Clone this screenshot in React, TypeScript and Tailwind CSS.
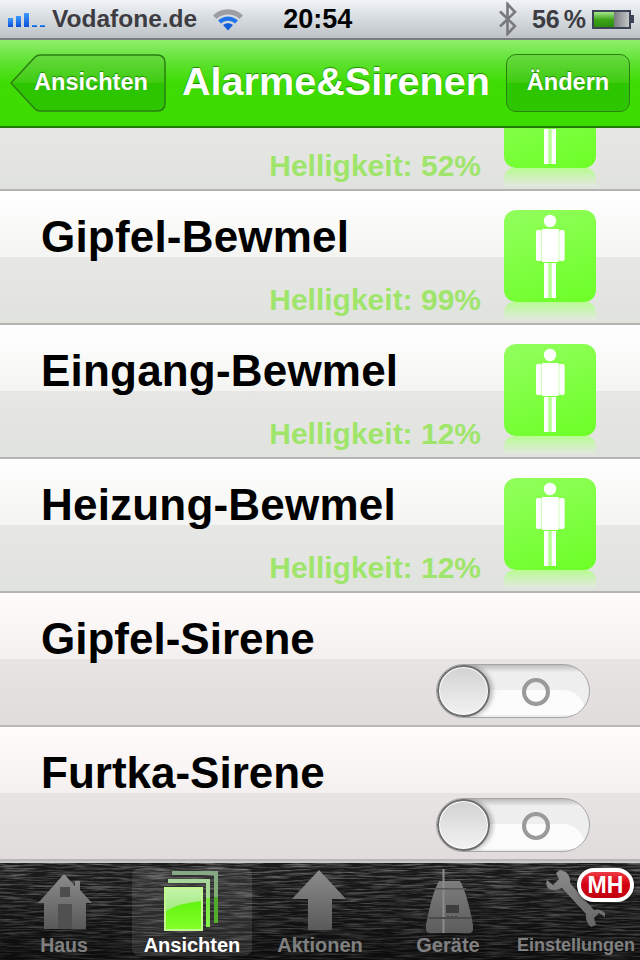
import React from "react";

const font = "font-['Liberation_Sans',Arial,sans-serif]";

function Person() {
  return (
    <svg viewBox="0 0 92 92" className="w-[92px] h-[92px] block">
      <g fill="#fff">
        <circle cx="46" cy="11" r="6.2" />
        <rect x="32" y="20" width="28.5" height="31" rx="2" opacity="0.55" />
        <rect x="40" y="53" width="12" height="35" opacity="0.45" />
        <rect x="38" y="19" width="16.5" height="33" />
        <rect x="32" y="20" width="5.2" height="31" rx="2" />
        <rect x="55.3" y="20" width="5.2" height="31" rx="2" />
        <rect x="40" y="53" width="4.3" height="35" />
        <rect x="47.7" y="53" width="4.3" height="35" />
      </g>
    </svg>
  );
}

function LightRow({ title, value }: { title: string; value: string }) {
  return (
    <div className="flex h-[134px] border-b-2 border-[#b4b4b2] bg-[linear-gradient(to_bottom,#ffffff_0%,#f4f5f2_50%,#e7e8e5_50%,#e0e2de_100%)] pl-[41px] pr-[44px]">
      <div className="flex flex-1 flex-col">
        <div className="mt-[20px] h-[52px] text-[44px] leading-[52px] font-bold tracking-[0.2px] text-black">{title}</div>
        <div className="mt-[21px] pr-[23px] text-right text-[30px] leading-[32px] font-bold text-[#9fe56b]">{value}</div>
      </div>
      <div className="mt-[19px] w-[92px]">
        <div className="h-[92px] w-[92px] rounded-[12px] bg-[linear-gradient(160deg,#92ff5e_0%,#6cff26_100%)]">
          <Person />
        </div>
        <div className="h-[18px] w-[92px] rounded-t-[10px] bg-[linear-gradient(to_bottom,#b8fb92_0%,#e3e8e0_100%)]" />
      </div>
    </div>
  );
}

function SirenRow({ title }: { title: string }) {
  return (
    <div className="flex h-[134px] border-b-2 border-[#b8b6b5] bg-[linear-gradient(to_bottom,#fffcfb_0%,#f4f0ef_50%,#e8e4e3_50%,#e0dcdb_100%)] pl-[41px] pr-[50px]">
      <div className="flex-1">
        <div className="mt-[20px] h-[52px] text-[44px] leading-[52px] font-bold text-black">{title}</div>
      </div>
      <div className="relative mt-[71px] h-[54px] w-[154px] overflow-hidden rounded-full border border-[#a5a5a5] bg-[linear-gradient(to_bottom,#bdbdbd_0%,#eeeeee_14%,#efefef_100%)]">
        <div className="absolute left-[40px] top-[25px] h-[25px] w-[108px] rounded-tr-[22px] bg-[#fcfcfc]" />
        <div className="absolute left-[85px] top-[13px] h-[28px] w-[28px] rounded-full border-[4px] border-[#9a9a9a]" />
        <div className="absolute left-0 top-0 h-[52px] w-[53px] rounded-full border-2 border-[#6e6e6e] bg-[linear-gradient(to_bottom,#d2d2d2,#f2f2f2)] shadow-[3px_0_4px_rgba(0,0,0,0.25),inset_0_0_0_1px_#ffffff]" />
      </div>
    </div>
  );
}

function Signal() {
  const bars = ["h-[9px]", "h-[11px]", "h-[14px]", "h-[2px]", "h-[2px]"];
  return (
    <div className="flex h-[16px] items-end gap-[3px]">
      {bars.map((b, i) => (
        <div key={i} className={`w-[5px] ${b} bg-[linear-gradient(to_bottom,#3f9bff,#0a4fd8)]`} />
      ))}
    </div>
  );
}

function Wifi() {
  return (
    <svg width="32" height="25" viewBox="0 0 32 25" className="block">
      <path d="M1 8.5 C9 0 23 0 31 8.5 L27.5 12 C21 6 11 6 4.5 12 Z" fill="#9c9ea3" />
      <path d="M6 13.5 C12 8 20 8 26 13.5 L23 16.5 C18.5 12.8 13.5 12.8 9 16.5 Z" fill="#1f74e8" />
      <path d="M11 18 C14 15.5 18 15.5 21 18 L16 23.5 Z" fill="#1260d8" />
    </svg>
  );
}

function Bluetooth() {
  return (
    <svg width="20" height="34" viewBox="0 0 20 34" className="block">
      <path d="M2 9.5 L17 24 L9.5 32 L9.5 2 L17 10 L2 24.5" fill="none" stroke="#77797d" strokeWidth="2.6" />
    </svg>
  );
}

function Battery() {
  return (
    <div className="flex items-center">
      <div className="h-[19px] w-[39px] border-2 border-[#3c4356] bg-[linear-gradient(to_right,#33393f,#7d7f82_60%,#c4c6c8)]">
        <div className="h-full w-[20px] bg-[linear-gradient(to_bottom,#a5e88d,#3fa51a_50%,#2a8c10)]" />
      </div>
      <div className="h-[8px] w-[3px] bg-[#3c4356]" />
    </div>
  );
}

function BackShape() {
  return (
    <svg viewBox="0 0 156 58" className="absolute inset-0 h-[58px] w-[156px]">
      <defs>
        <linearGradient id="back" x1="0" y1="0" x2="0" y2="1">
          <stop offset="0" stopColor="#67d93f" />
          <stop offset="0.5" stopColor="#3fcb12" />
          <stop offset="0.5" stopColor="#2dc400" />
          <stop offset="1" stopColor="#2dc600" />
        </linearGradient>
      </defs>
      <path
        d="M1 29 L25 3 Q27 1 31 1 L147 1 Q155 1 155 9 L155 49 Q155 57 147 57 L31 57 Q27 57 25 55 Z"
        fill="url(#back)"
        stroke="#2b7f12"
        strokeWidth="1.5"
      />
    </svg>
  );
}

function Grad({ id, from = "#8c8c8c", to = "#595959" }: { id: string; from?: string; to?: string }) {
  return (
    <defs>
      <linearGradient id={id} x1="0" y1="0" x2="0" y2="1">
        <stop offset="0" stopColor={from} />
        <stop offset="1" stopColor={to} />
      </linearGradient>
    </defs>
  );
}

function House() {
  return (
    <svg width="54" height="55" viewBox="0 0 54 55" className="mb-[4px] ml-[2px] block">
      <Grad id="h" />
      <path d="M26 0 L37 12 L37 7 L42 7 L42 16 L54 29 L48 29 L48 55 L6 55 L6 29 L0 29 Z" fill="url(#h)" />
      <rect x="22" y="13" width="10" height="10" fill="#4d4d4d" />
      <rect x="20" y="30" width="14" height="25" fill="#505050" />
    </svg>
  );
}

function Arrow() {
  return (
    <svg width="54" height="60" viewBox="0 0 54 60" className="mb-[3px] mr-[2px] block">
      <Grad id="a" />
      <path d="M0 29 L27 0 L54 29 L40 29 L40 60 L16 60 L16 29 Z" fill="url(#a)" />
    </svg>
  );
}

function Device() {
  return (
    <svg width="47" height="64" viewBox="0 0 47 64" className="ml-[3px] block">
      <Grad id="d" from="#7d7d7d" to="#5c5c5c" />
      <path d="M13 12 L34 12 Q41 24 47 56 L47 60 Q47 64 43 64 L4 64 Q0 64 0 60 L0 56 Q6 24 13 12 Z" fill="url(#d)" />
      <rect x="16.5" y="0" width="2" height="64" fill="#8b8b8b" />
      <rect x="7" y="19" width="33" height="1.5" fill="#565656" />
      <rect x="1" y="48" width="45" height="2" fill="#4c4c4c" />
      <rect x="20" y="36" width="13" height="8" fill="#3e3e3e" />
      <rect x="21" y="47" width="2" height="1" fill="#3e3e3e" />
      <rect x="25" y="47" width="2" height="1" fill="#3e3e3e" />
      <rect x="29" y="47" width="2" height="1" fill="#3e3e3e" />
    </svg>
  );
}

function Wrench() {
  return (
    <svg width="60" height="58" viewBox="0 0 60 58" className="mb-[5px] block">
      <Grad id="w" from="#8a8a8a" to="#666666" />
      <path
        d="M14 0 L20 2 Q25 7 24 13 L48 40 Q54 38 59 43 L59 47 L53 43 L48 48 L50 55 L45 57 Q39 52 40 44 L16 18 Q7 22 2 18 Q-1 14 1 10 L7 15 L13 9 L10 3 Z"
        fill="url(#w)"
      />
    </svg>
  );
}

function Pages() {
  return (
    <svg width="54" height="60" viewBox="0 0 54 60" className="mb-[2px] mr-[2px] block">
      <defs>
        <linearGradient id="p3" x1="0" y1="0" x2="0" y2="1">
          <stop offset="0" stopColor="#86a884" />
          <stop offset="0.5" stopColor="#7fae74" />
          <stop offset="0.5" stopColor="#4fa82a" />
          <stop offset="1" stopColor="#55b02c" />
        </linearGradient>
        <linearGradient id="p2" x1="0" y1="0" x2="0" y2="1">
          <stop offset="0" stopColor="#a9d49c" />
          <stop offset="0.4" stopColor="#a4dc90" />
          <stop offset="0.4" stopColor="#78e83c" />
          <stop offset="1" stopColor="#86f04a" />
        </linearGradient>
        <linearGradient id="p1" x1="0" y1="0" x2="0" y2="1">
          <stop offset="0" stopColor="#52ee00" />
          <stop offset="1" stopColor="#84ff2a" />
        </linearGradient>
        <linearGradient id="p0" x1="0" y1="0" x2="0" y2="1">
          <stop offset="0" stopColor="#c2f4a8" />
          <stop offset="1" stopColor="#a2ea80" />
        </linearGradient>
      </defs>
      <path d="M8 0 H54 V52 H50 V4 H8 Z" fill="url(#p3)" />
      <path d="M4 8 H46 V56 H42 V12 H4 Z" fill="url(#p2)" />
      <rect x="1" y="17" width="37" height="42" fill="url(#p1)" stroke="#c4f88e" strokeWidth="2" />
      <path d="M2 18 H37 V30 Q16 32 2 40 Z" fill="url(#p0)" />
    </svg>
  );
}

function Tab({
  label,
  icon,
  active,
  text,
}: {
  label: string;
  icon: React.ReactNode;
  active?: boolean;
  text: string;
}) {
  return (
    <div className={`flex h-[88px] w-[120px] flex-col items-center rounded-[8px] ${active ? "bg-white/10" : ""}`}>
      <div className="flex h-[65px] items-end">{icon}</div>
      <div className={`mt-[2px] whitespace-nowrap leading-[20px] font-bold ${text} ${active ? "text-white" : "text-[#808080]"}`}>{label}</div>
    </div>
  );
}

function Grain() {
  return (
    <svg className="absolute inset-0 h-full w-full" width="640" height="97">
      <defs>
        <filter id="grain" x="0" y="0" width="100%" height="100%">
          <feTurbulence type="fractalNoise" baseFrequency="0.035 0.55" numOctaves="3" seed="7" />
          <feColorMatrix
            type="matrix"
            values="0 0 0 0 1  0 0 0 0 1  0 0 0 0 1  2.6 0 0 0 -1.05"
          />
        </filter>
        <linearGradient id="fade" x1="0" y1="0" x2="0" y2="1">
          <stop offset="0" stopColor="#000" stopOpacity="0" />
          <stop offset="1" stopColor="#000" stopOpacity="0.55" />
        </linearGradient>
      </defs>
      <rect width="640" height="97" filter="url(#grain)" opacity="0.34" />
      <rect width="640" height="97" fill="url(#fade)" />
    </svg>
  );
}

export default function App() {
  return (
    <div className={`flex h-[960px] w-[640px] flex-col overflow-hidden bg-white ${font}`}>
      <div className="flex h-[40px] shrink-0 items-center border-b-2 border-[#7b7c80] bg-[linear-gradient(to_bottom,#f0f4f8,#bdc2c7)] pl-[8px] pr-[6px]">
        <Signal />
        <div className="ml-[7px] text-[24.5px] font-bold leading-[38px] text-[#3c3c42]">Vodafone.de</div>
        <div className="ml-[15px]"><Wifi /></div>
        <div className="ml-[39px] text-[27px] font-bold leading-[38px] text-black">20:54</div>
        <div className="ml-auto"><Bluetooth /></div>
        <div className="ml-[14px] flex gap-[4px] text-[25px] font-bold leading-[38px] text-[#3c3c42]">
          <span>56</span>
          <span>%</span>
        </div>
        <div className="ml-[6px]"><Battery /></div>
      </div>

      <div className="flex h-[88px] shrink-0 items-center border-b-2 border-[#237a05] bg-[linear-gradient(to_bottom,#8fee6c_0%,#5fe233_25%,#3edc03_50%,#3ddc00_100%)] pl-[10px] pr-[10px]">
        <div className="relative flex h-[58px] w-[156px] items-center justify-end pr-[18px]">
          <BackShape />
          <span className="relative text-[23.6px] font-bold text-white [text-shadow:0_-1px_1px_#1f8a00]">Ansichten</span>
        </div>
        <div className="flex-1 pb-[2px] text-center text-[39.6px] font-bold text-white [text-shadow:0_-1px_1px_#1f8a00]">Alarme&amp;Sirenen</div>
        <div className="flex h-[58px] w-[124px] items-center justify-center rounded-[10px] border-[1.5px] border-[#2b7f12] bg-[linear-gradient(to_bottom,#67d93f_0%,#3fcb12_50%,#2dc400_50%,#2dc600_100%)] text-[23.6px] font-bold text-white [text-shadow:0_-1px_1px_#1f8a00]">
          Ändern
        </div>
      </div>

      <div className="flex-1 overflow-hidden">
        <div className="-mt-[71px]">
          <LightRow title="" value="Helligkeit: 52%" />
          <LightRow title="Gipfel-Bewmel" value="Helligkeit: 99%" />
          <LightRow title="Eingang-Bewmel" value="Helligkeit: 12%" />
          <LightRow title="Heizung-Bewmel" value="Helligkeit: 12%" />
          <SirenRow title="Gipfel-Sirene" />
          <SirenRow title="Furtka-Sirene" />
        </div>
      </div>

      <div className="relative h-[99px] shrink-0 border-t-2 border-[#c9c9c9] bg-[#1b1b1b]">
        <Grain />
        <div className="relative flex items-start justify-between px-[4px] pt-[5px]">
          <Tab label="Haus" icon={<House />} text="text-[19.5px]" />
          <Tab label="Ansichten" icon={<Pages />} active text="text-[20px]" />
          <Tab label="Aktionen" icon={<Arrow />} text="text-[20px]" />
          <Tab label="Geräte" icon={<Device />} text="text-[20px]" />
          <Tab label="Einstellungen" icon={<Wrench />} text="text-[18px]" />
        </div>
        <div className="absolute left-[577px] top-[5px] flex h-[34px] w-[57px] items-center justify-center rounded-full border-[4px] border-white bg-[linear-gradient(to_bottom,#ee3a44,#d40010_50%,#c00010)] text-[23px] font-bold text-white shadow-[0_1px_3px_rgba(0,0,0,0.6)]">
          MH
        </div>
      </div>
    </div>
  );
}
